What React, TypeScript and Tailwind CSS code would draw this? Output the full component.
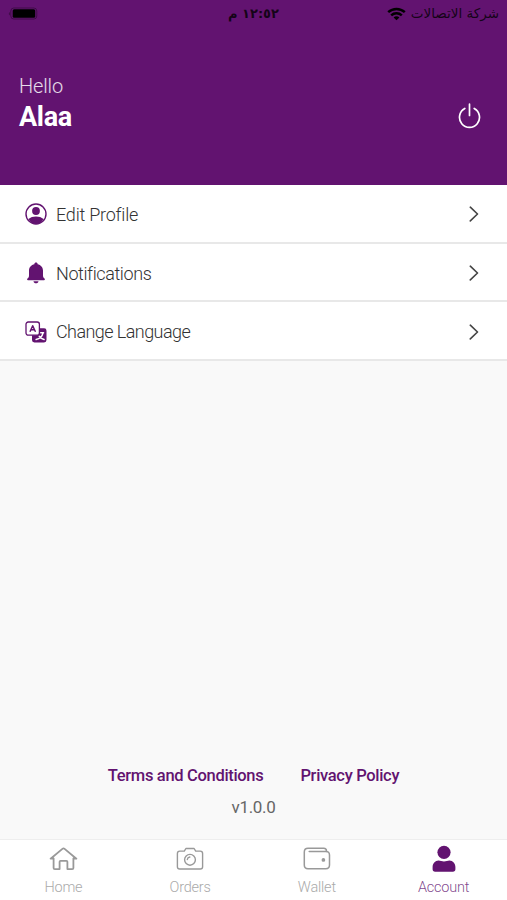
import React from 'react';

const ProfileIcon: React.FC = () => (
    <svg width="22" height="22" viewBox="0 0 22 22">
        <path d="M3.400 16C5.600 14.300 8 13.500 11 13.500s5.400.8 7.600 2.500c-1.600 3-4.500 5-7.600 5s-6-2-7.600-5z" fill="currentColor" />
        <circle cx="11" cy="8" r="3.900" fill="currentColor" />
        <circle cx="11" cy="11" r="10" fill="none" stroke="currentColor" strokeWidth="1.400" />
    </svg>
);

const BellIcon: React.FC = () => (
    <svg width="22" height="22" viewBox="0 0 22 22" fill="currentColor">
        <path d="M11 .5c.9 0 1.600.6 1.600 1.400v.3c3.200.7 5.400 3.100 5.400 6.300v5c0 1.400.5 2.300 1.500 3 .7.500.5 1.700-.5 1.700H3c-1 0-1.200-1.200-.5-1.700 1-.7 1.500-1.600 1.500-3v-5c0-3.200 2.200-5.600 5.400-6.300v-.3C9.400 1.100 10.100.5 11 .5z" />
        <path d="M8.500 19.200h5c-.2 1.300-1.200 2.100-2.500 2.100s-2.300-.8-2.500-2.100z" />
    </svg>
);

const LanguageIcon: React.FC = () => (
    <svg width="22" height="22" viewBox="0 0 22 22" fill="none" strokeLinecap="round" strokeLinejoin="round">
        <rect x="7" y="7.300" width="14.500" height="14.200" rx="2.400" fill="currentColor" />
        <rect x="1" y="1" width="13.400" height="13.200" rx="2.200" fill="#fff" stroke="currentColor" strokeWidth="1.300" />
        <path d="M5.200 10.300 7.700 4.700l2.500 5.600M6.100 8.800h3.200" stroke="currentColor" strokeWidth="1.500" />
        <path d="M15.700 11.800h2.900M18 12c-.7 3.100-3.200 5.700-6.900 6.500M14.200 15.200c1.300 1.700 2.700 2.700 4.900 3.300" stroke="#fff" strokeWidth="1.400" />
    </svg>
);

const HomeIcon: React.FC = () => (
    <svg width="30" height="26" viewBox="-0.5 0 30 26" fill="none" stroke="currentColor" strokeWidth="1.800" strokeLinecap="round" strokeLinejoin="round">
        <path d="M5.100 12.300v9.600c0 .8.400 1.200 1.200 1.200h4.800v-7.300c0-.6.400-1 1-1h5.800c.6 0 1 .4 1 1v7.300h4.800c.8 0 1.200-.4 1.200-1.200v-9.600M5.100 12.400l-3 .3L13.900 2.900c.7-.6 1.500-.6 2.200 0l11.800 9.800-3-.3" />
    </svg>
);

const CameraIcon: React.FC = () => (
    <svg width="30" height="26" viewBox="0 0 30 26" fill="none" stroke="currentColor" strokeWidth="1.400" strokeLinecap="round" strokeLinejoin="round">
        <path d="M4.700 5.100h4.600l1.600-2.600h8.200l1.600 2.600h4.600c1.400 0 2.300.9 2.300 2.300v13.300c0 1.400-.9 2.300-2.300 2.300H4.700c-1.400 0-2.300-.9-2.300-2.300V7.400c0-1.400.9-2.300 2.300-2.300z" />
        <circle cx="15" cy="13.800" r="5.400" />
        <path d="M12.300 13.500c.2-1.400 1.100-2.300 2.500-2.500" />
    </svg>
);

const WalletIcon: React.FC = () => (
    <svg width="30" height="26" viewBox="0 0 30 26" fill="none" stroke="currentColor" strokeWidth="1.500" strokeLinecap="round" strokeLinejoin="round">
        <path d="M24.500 5.100c0-1.900-1-2.900-2.800-2.900H6c-2.400 0-3.700 1.300-3.700 3.700v13.200c0 2.400 1.300 3.700 3.700 3.700h17.800c2.400 0 3.700-1.300 3.700-3.700V9c0-2.400-1.300-3.600-3.700-3.600H7.200" />
        <circle cx="21.400" cy="13.900" r="1.100" fill="currentColor" />
    </svg>
);

const AccountIcon: React.FC = () => (
    <svg width="30" height="28" viewBox="0 0 30 28" fill="currentColor">
        <circle cx="15" cy="7.300" r="6.600" />
        <path d="M9.600 15.600c1.600.5 3.300.8 5.400.8s3.800-.3 5.400-.8c3.500.2 6 2.900 6 6.500v2.200c0 1.600-.9 2.500-2.500 2.500H6.100c-1.600 0-2.500-.9-2.500-2.500v-2.200c0-3.600 2.500-6.300 6-6.500z" />
    </svg>
);

const StatusBar: React.FC = () => (
    <div className="grid grid-cols-3 items-center h-[27px] px-2 text-black/80 font-['DejaVu_Sans',sans-serif]">
        <svg width="30" height="14" viewBox="0 0 30 14">
            <rect x="2.800" y="1" width="26" height="11" rx="3" fill="none" stroke="#000" strokeOpacity=".35" />
            <rect x="4.700" y="2.200" width="22.500" height="8.600" rx="1.500" fill="#000" />
            <path d="M1.800 5c-1.300.5-1.300 3 0 3.500z" fill="#000" fillOpacity=".4" />
        </svg>
        <span dir="rtl" className="justify-self-center font-bold text-[13px] tracking-[-0.7px] whitespace-nowrap">١٢:٥٢ م</span>
        <div className="flex items-center justify-end gap-[5px]">
            <svg width="19" height="14" viewBox="0 0 19 14" fill="none" stroke="#000" strokeWidth="2.500">
                <path d="M1.200 5.100c4.700-4.300 11.900-4.300 16.600 0M4.200 8.300c3-2.800 7.600-2.800 10.600 0" />
                <path d="M9.500 13.300 6.600 10.400c1.600-1.500 4.200-1.500 5.800 0z" fill="#000" stroke="none" />
            </svg>
            <span dir="rtl" className="whitespace-nowrap text-[13.500px]">شركة الاتصالات</span>
        </div>
    </div>
);

const App: React.FC = () => {
    const menuItems = [
        { label: 'Edit Profile', icon: <ProfileIcon />, text: 'tracking-[-0.22px]' },
        { label: 'Notifications', icon: <BellIcon />, text: 'tracking-[-0.4px]' },
        { label: 'Change Language', icon: <LanguageIcon />, text: 'tracking-[-0.57px]' },
    ];

    const tabs = [
        { label: 'Home', icon: <HomeIcon />, active: false },
        { label: 'Orders', icon: <CameraIcon />, active: false },
        { label: 'Wallet', icon: <WalletIcon />, active: false },
        { label: 'Account', icon: <AccountIcon />, active: true },
    ];

    return (
        <div className="flex flex-col w-full h-screen overflow-hidden bg-[#f9f9f9] font-['Roboto',sans-serif]">
            <header className="h-[185px] shrink-0 bg-[#621370]">
                <StatusBar />
                <div className="flex justify-between pt-[44px] pl-[19px] pr-[26px] text-white">
                    <div>
                        <p className="text-[20px] leading-[30px] font-light tracking-[-0.15px] text-white/85">Hello</p>
                        <p className="text-[27px] leading-[32px] font-bold tracking-[-0.3px]">Alaa</p>
                    </div>
                    <svg className="mt-[32px]" width="23" height="26" viewBox="0 0 23 26" fill="none" stroke="currentColor" strokeWidth="1.700" strokeLinecap="round">
                        <path d="M11.500 1.200v11.300M6.800 5.500a10 10 0 1 0 9.400 0" />
                    </svg>
                </div>
            </header>

            <div className="shrink-0">
                {menuItems.map((item) => (
                    <div key={item.label} className="flex items-center h-[58.700px] pt-[2px] pl-[25px] pr-[28px] bg-white border-b-2 border-[#e8e8e8] text-[#621370]">
                        {item.icon}
                        <span className={`ml-[9px] flex-1 text-[18px] font-light text-[#333] ${item.text}`}>{item.label}</span>
                        <svg width="10" height="16" viewBox="0 0 10 16" fill="none" stroke="#444" strokeWidth="1.600" strokeLinecap="round" strokeLinejoin="round">
                            <path d="M1.300 1.200 8.500 8l-7.200 6.900" />
                        </svg>
                    </div>
                ))}
            </div>

            <div className="flex-1 flex flex-col justify-end items-center pb-[20px]">
                <div className="flex gap-[37px] text-[16.500px] leading-[24px] font-medium text-[#621370] whitespace-nowrap">
                    <span className="tracking-[-0.32px]">Terms and Conditions</span>
                    <span className="tracking-[-0.32px]">Privacy Policy</span>
                </div>
                <p className="mt-[7px] text-[17px] leading-[24px] tracking-[-0.3px] text-[#666]">v1.0.0</p>
            </div>

            <nav className="grid grid-cols-4 h-[61px] shrink-0 bg-white border-t border-[#eee]">
                {tabs.map((tab) => (
                    <div key={tab.label} className={`flex flex-col items-center pt-[5px] ${tab.active ? 'text-[#621370]' : 'text-[#999]'}`}>
                        <div className="flex items-center h-[28px]">{tab.icon}</div>
                        <span className={`mt-[5px] text-[14.500px] leading-[20px] font-light tracking-[-0.2px] ${tab.active ? 'text-[#621370]/80' : 'text-[#aaa]'}`}>{tab.label}</span>
                    </div>
                ))}
            </nav>
        </div>
    );
};

export default App;
